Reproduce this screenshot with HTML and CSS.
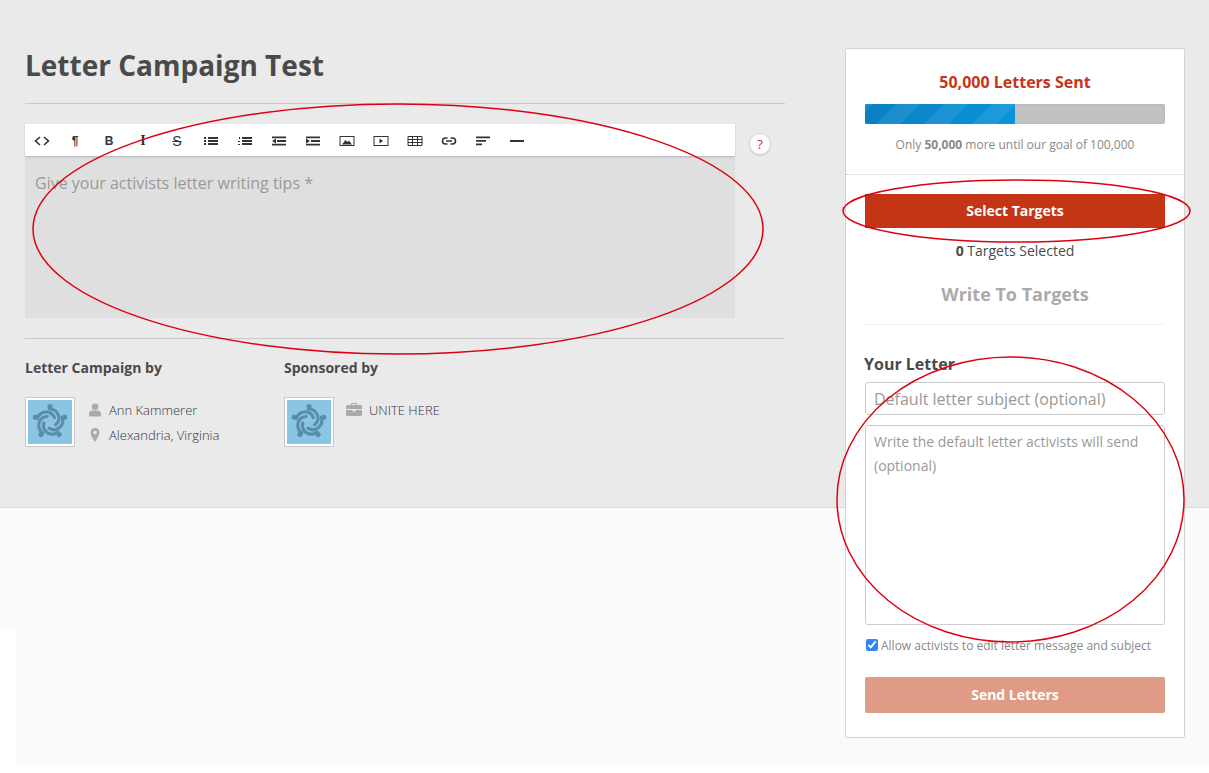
FILE: index.html
```html
<!DOCTYPE html>
<html lang="en">
<head>
<meta charset="utf-8">
<title>Letter Campaign Test</title>
<link rel="stylesheet" href="styles.css">
</head>
<body>
<svg width="0" height="0" class="defs">
  <defs>
    <g id="logo">
      <g id="fig">
        <circle cx="25" cy="7.500" r="2.900"/>
        <path d="M30 20C28 15 24 13 20 13.500 15 14 12 17 10.500 21" class="arm"/>
      </g>
      <use href="#fig" transform="rotate(72 25 25)"/>
      <use href="#fig" transform="rotate(144 25 25)"/>
      <use href="#fig" transform="rotate(216 25 25)"/>
      <use href="#fig" transform="rotate(288 25 25)"/>
    </g>
  </defs>
</svg>
<div class="hero">
  <main class="main">
    <h1 class="title">Letter Campaign Test</h1>
    <div class="editor-row">
      <div class="editor">
        <div class="toolbar">
          <span class="tool"><svg width="16" height="12" viewBox="0 0 16 12"><path d="M6 2 1.500 6 6 10M10 2l4.500 4L10 10" class="ln"/></svg></span>
          <span class="tool glyph">¶</span>
          <span class="tool glyph">B</span>
          <span class="tool glyph ital">I</span>
          <span class="tool glyph strike">S</span>
          <span class="tool"><svg width="16" height="12" viewBox="0 0 16 12"><path d="M1 2h2v2H1zM1 5h2v2H1zM1 8h2v2H1zM5 2h10v2H5zM5 5h10v2H5zM5 8h10v2H5z" class="fl"/></svg></span>
          <span class="tool"><svg width="16" height="12" viewBox="0 0 16 12"><path d="M2 2h1v2H2zM1 6h2v1H1zM1 9h2v1H1zM5 2h10v2H5zM5 5h10v2H5zM5 8h10v2H5z" class="fl"/></svg></span>
          <span class="tool"><svg width="16" height="12" viewBox="0 0 16 12"><path d="M1 6l4-2.500v5zM1 1.500h14v1.800H1zM6 5.100h9v1.800H6zM1 8.700h14v1.800H1z" class="fl"/></svg></span>
          <span class="tool"><svg width="16" height="12" viewBox="0 0 16 12"><path d="M5 6 1 3.500v5zM1 1.500h14v1.800H1zM6 5.100h9v1.800H6zM1 8.700h14v1.800H1z" class="fl"/></svg></span>
          <span class="tool"><svg width="16" height="12" viewBox="0 0 16 12"><rect x="1" y="1.500" width="14" height="9" class="ln1"/><path d="M3 9.500 6.500 5 8.500 7 10 5.500 13 9.500z" class="fl"/></svg></span>
          <span class="tool"><svg width="16" height="12" viewBox="0 0 16 12"><rect x="1" y="1.500" width="14" height="9" class="ln1"/><path d="M6.500 3.500 10 6 6.500 8.500z" class="fl"/></svg></span>
          <span class="tool"><svg width="16" height="12" viewBox="0 0 16 12"><path d="M1 1.500h14v9H1zM1 4.500h14M1 7.500h14M5.500 1.500v9M10.500 1.500v9" class="ln1"/></svg></span>
          <span class="tool"><svg width="16" height="12" viewBox="0 0 16 12"><path d="M6.500 3H4.500a3 3 0 0 0 0 6h2M9.500 3h2a3 3 0 0 1 0 6h-2M5 6h6" class="ln"/></svg></span>
          <span class="tool"><svg width="16" height="12" viewBox="0 0 16 12"><path d="M1 1.500h14v1.700H1zM1 5h10v1.700H1zM1 8.500h6v1.700H1z" class="fl"/></svg></span>
          <span class="tool"><svg width="16" height="12" viewBox="0 0 16 12"><path d="M1 5h14v2H1z" class="fl"/></svg></span>
        </div>
        <div class="editor-body">Give your activists letter writing tips *</div>
      </div>
      <span class="help">?</span>
    </div>
    <div class="credits">
      <section class="credit credit-a">
        <h3 class="credit-title">Letter Campaign by</h3>
        <div class="credit-body">
          <span class="avatar"><svg width="44" height="44" viewBox="0 0 50 50" class="logo"><use href="#logo"/></svg></span>
          <ul class="meta">
            <li class="meta-row"><svg class="mi" width="14" height="14" viewBox="0 0 14 14"><circle cx="7" cy="3.800" r="3.300"/><path d="M1 13.500V10.500C1 8.500 3 7.500 4.500 7.500h5C11 7.500 13 8.500 13 10.500v3z"/></svg>Ann Kammerer</li>
            <li class="meta-row"><svg class="mi" width="14" height="14" viewBox="0 0 14 14"><path fill-rule="evenodd" d="M7 0a4.500 4.500 0 0 0-4.500 4.500C2.500 7.500 7 14 7 14s4.500-6.500 4.500-9.500A4.500 4.500 0 0 0 7 0zm0 2.800a1.800 1.800 0 1 1 0 3.600 1.800 1.800 0 0 1 0-3.600z"/></svg>Alexandria, Virginia</li>
          </ul>
        </div>
      </section>
      <section class="credit">
        <h3 class="credit-title">Sponsored by</h3>
        <div class="credit-body">
          <span class="avatar"><svg width="44" height="44" viewBox="0 0 50 50" class="logo"><use href="#logo"/></svg></span>
          <ul class="meta">
            <li class="meta-row meta-org"><svg class="mi wide" width="16" height="13" viewBox="0 0 16 13"><path fill-rule="evenodd" d="M5 2V1a1 1 0 0 1 1-1h4a1 1 0 0 1 1 1v1h3.500A1.500 1.500 0 0 1 16 3.500V6H0V3.500A1.500 1.500 0 0 1 1.500 2zm1 0h4V1H6zM0 7h6.500v1.500h3V7H16v4.500A1.500 1.500 0 0 1 14.500 13h-13A1.500 1.500 0 0 1 0 11.500z"/></svg>UNITE HERE</li>
          </ul>
        </div>
      </section>
    </div>
  </main>
  <aside class="panel">
    <div class="stats">
      <h2 class="sent">50,000 Letters Sent</h2>
      <div class="progress"><div class="progress-fill" style="width:50%"></div></div>
      <p class="goal">Only <b>50,000</b> more until our goal of 100,000</p>
    </div>
    <div class="actions">
      <button class="btn btn-primary">Select Targets</button>
      <p class="count"><b>0</b> Targets Selected</p>
      <h2 class="write">Write To Targets</h2>
      <hr class="rule">
      <h3 class="letter-label">Your Letter</h3>
      <input class="subject" type="text" placeholder="Default letter subject (optional)">
      <textarea class="message" placeholder="Write the default letter activists will send (optional)"></textarea>
      <label class="allow"><input type="checkbox" class="check" checked>Allow activists to edit letter message and subject</label>
      <button class="btn btn-send">Send Letters</button>
    </div>
  </aside>
</div>
<div class="lower-top"></div>
<div class="lower-bottom"></div>
<svg class="marks" width="1209" height="773" viewBox="0 0 1209 773">
  <ellipse cx="398" cy="229" rx="365" ry="125"/>
  <ellipse cx="1016.500" cy="211" rx="173.500" ry="31"/>
  <ellipse cx="1010.500" cy="499.500" rx="173.500" ry="142.500"/>
</svg>
</body>
</html>
```
FILE: styles.css
```css
* { box-sizing: border-box; }
html, body { margin: 0; padding: 0; }
body {
  position: relative;
  height: 773px;
  overflow: hidden;
  background: #fff;
  font-family: "Open Sans", sans-serif;
  color: #4a4a4a;
}
.defs { position: absolute; }
.hero {
  display: flex;
  align-items: flex-start;
  height: 508px;
  padding-left: 25px;
  background: #eaeaea;
  border-bottom: 1px solid #d9d9d9;
}
.main { width: 760px; }
.title {
  margin: 0;
  height: 104px;
  padding-top: 43px;
  font-size: 28px;
  line-height: 44px;
  font-weight: 700;
  color: #4a4a4a;
  border-bottom: 1px solid #c9c9c9;
}
.editor-row {
  display: flex;
  align-items: flex-start;
  padding: 20px 0;
  border-bottom: 1px solid #c9c9c9;
}
.editor { width: 710px; }
.toolbar {
  display: flex;
  align-items: center;
  height: 32px;
  background: #fff;
  box-shadow: 0 1px 2px rgba(0,0,0,.2);
  position: relative;
}
.tool {
  width: 34px;
  height: 34px;
  flex: none;
  display: flex;
  align-items: center;
  justify-content: center;
  padding-top: 2px;
  color: #333;
}
.tool:first-child { width: 33px; }
.glyph { font-size: 12px; font-weight: 700; font-family: "Liberation Sans", sans-serif; }
.ital { font-family: "Liberation Serif", serif; font-size: 14px; }
.strike { text-decoration: line-through; font-weight: 400; font-size: 14px; }
.fl { fill: #333; }
.ln { fill: none; stroke: #333; stroke-width: 1.600; }
.ln1 { fill: none; stroke: #333; stroke-width: 1; }
.editor-body {
  height: 162px;
  padding: 16px 10px;
  background: #dfdfdf;
  color: #999;
  font-size: 16px;
  line-height: 22px;
}
.help {
  width: 22px;
  height: 22px;
  margin: 9px 0 0 14px;
  border-radius: 50%;
  background: #fff;
  border: 1px solid #d5d5d5;
  box-shadow: 0 1px 1px rgba(0,0,0,.1);
  color: #d0321a;
  font-size: 13px;
  font-weight: 400;
  line-height: 20px;
  text-align: center;
}
.credits { display: flex; padding-top: 19px; }
.credit-a { width: 259px; }
.credit-title {
  margin: 0 0 19px;
  font-size: 14px;
  line-height: 20px;
  font-weight: 700;
  color: #4a4a4a;
}
.credit-body { display: flex; align-items: flex-start; }
.avatar {
  width: 50px;
  height: 50px;
  flex: none;
  border: 1px solid #c9c9c9;
  background: #fff;
  padding: 2px;
  display: block;
}
.logo { display: block; background: #8ac6e4; fill: #5b8ca8; }
.arm { fill: none; stroke: #5b8ca8; stroke-width: 3.600; stroke-linecap: round; }
.meta { list-style: none; margin: 0; padding: 0 0 0 13px; }
.meta-row {
  display: flex;
  align-items: center;
  height: 25px;
  font-size: 13px;
  font-weight: 300;
  color: #33333f;
  gap: 7px;
}
.meta-org { margin-left: -1px; gap: 7px; }
.mi { fill: #aaa; flex: none; }
.panel {
  flex: none;
  width: 340px;
  height: 690px;
  margin: 48px 0 0 60px;
  background: #fff;
  border: 1px solid #d2d2d2;
  border-radius: 2px;
  position: relative;
  z-index: 1;
}
.stats {
  height: 126px;
  padding: 21px 19px 0;
  border-bottom: 1px dotted #ccc;
  text-align: center;
}
.sent {
  margin: 0 0 10px;
  font-size: 16px;
  line-height: 24px;
  font-weight: 700;
  color: #c4351a;
}
.progress {
  height: 20px;
  background: #c2c2c2;
  border-radius: 2px;
  overflow: hidden;
  box-shadow: inset 0 0 3px rgba(0,0,0,.1);
}
.progress-fill {
  height: 100%;
  background-color: #0a8ed4;
  background-image:
    linear-gradient(135deg, rgba(255,255,255,.08) 25%, transparent 25%, transparent 50%, rgba(255,255,255,.08) 50%, rgba(255,255,255,.08) 75%, transparent 75%),
    linear-gradient(90deg, #0a7fc2, #0a94da);
  background-size: 48px 48px, 100% 100%;
  background-position: -16px 0, 0 0;
}
.goal { margin: 12px 0 0; font-size: 12px; line-height: 18px; color: #888; }
.actions { padding: 19px 19px 0; display: flex; flex-direction: column; }
.btn {
  display: block;
  width: 300px;
  border: 0;
  color: #fff;
  font-family: inherit;
  font-weight: 700;
  font-size: 14px;
}
.btn-primary { height: 34px; padding-bottom: 2px; background: #c43516; }
.count { margin: 13px 0 0; font-size: 14px; line-height: 20px; text-align: center; color: #4a4a4a; }
.write { margin: 20px 0 0; font-size: 18px; line-height: 26px; font-weight: 700; color: #aaa; text-align: center; }
.rule { width: 100%; margin: 17px 0 0; border: 0; border-top: 1px solid #f1f1f1; }
.letter-label { margin: 28px 0 7px -1px; font-size: 16px; line-height: 22px; font-weight: 700; color: #4a4a4a; }
.subject, .message {
  display: block;
  width: 300px;
  border: 1px solid #ccc;
  border-radius: 3px;
  background: #fff;
  font-family: inherit;
  color: #555;
  outline: 0;
}
.subject { height: 33px; padding: 0 8px; font-size: 16px; }
.message { height: 200px; margin-top: 10px; padding: 4px 8px; font-size: 14px; line-height: 24px; resize: none; }
.subject::placeholder { color: #999; opacity: 1; }
.message::placeholder { color: #999; opacity: 1; }
.allow {
  display: flex;
  align-items: center;
  margin-top: 12px;
  height: 16px;
  font-size: 12px;
  color: #888;
}
.check { width: 12px; height: 12px; margin: 0 3px 0 1px; flex: none; accent-color: #2f86f5; }
.btn-send { height: 36px; margin-top: 24px; padding-bottom: 2px; border-radius: 2px; background: #e09a88; }
.lower-top { height: 121px; background: #fafafa; }
.lower-bottom { height: 136px; margin-left: 16px; background: #fafafa; }
.marks { position: absolute; top: 0; left: 0; pointer-events: none; z-index: 2; }
.marks ellipse { fill: none; stroke: #de0010; stroke-width: 1.500; }
```
